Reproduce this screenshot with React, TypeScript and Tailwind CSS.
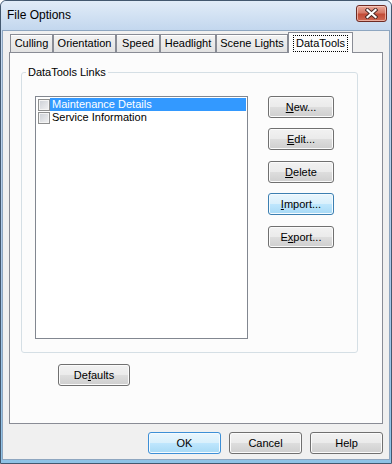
import React from 'react';

// Win7 "File Options" property sheet, DataTools page

const btn = 'flex items-center justify-center h-[22px] rounded-[3px] border text-[11px] leading-[13px] text-black';
const btnNormal = 'border-[#707070] bg-[linear-gradient(#f2f2f2_0%,#ebebeb_48%,#dddddd_52%,#cfcfcf_100%)] shadow-[inset_0_0_0_1px_#fbfbfb]';
const btnHot = 'border-[#3c7fb1] bg-[linear-gradient(#eaf6fd_0%,#d9f0fc_48%,#bee6fd_52%,#a7d9f5_100%)] shadow-[inset_0_0_0_1px_#f4fbff]';

function Label({ text, u }: { text: string; u?: number }) {
  if (u === undefined) return <span>{text}</span>;
  return (
    <span>
      {text.slice(0, u)}
      <span className="underline underline-offset-[1px]">{text[u]}</span>
      {text.slice(u + 1)}
    </span>
  );
}

function Btn({ text, u, hot, className }: { text: string; u?: number; hot?: boolean; className: string }) {
  return (
    <div className={`${btn} ${hot ? btnHot : btnNormal} ${className}`}>
      <Label text={text} u={u} />
    </div>
  );
}

const tabs = [
  { label: 'Culling', cls: 'ml-[1px] w-[43px]' },
  { label: 'Orientation', cls: 'w-[63px]' },
  { label: 'Speed', cls: 'w-[44px]' },
  { label: 'Headlight', cls: 'w-[56px]' },
  { label: 'Scene Lights', cls: 'w-[72px]' },
];

function CheckBox() {
  return (
    <div className="w-[12px] h-[12px] shrink-0 border border-[#8e8f8f] bg-[linear-gradient(135deg,#cbcfd5,#f2f2f3)] shadow-[inset_0_0_0_1px_#f4f4f4]" />
  );
}

export default function App() {
  return (
    <div className="w-[392px] h-[464px] flex flex-col bg-[linear-gradient(#c9dcf1,#a9c7e8_60%,#8ec2e6)] border border-[#43586f] rounded-t-[6px] font-['Liberation_Sans',Arial,sans-serif] text-black overflow-hidden">
      {/* title bar */}
      <div className="h-[29px] shrink-0 flex items-start justify-between pl-[6px] pr-[4px] bg-[linear-gradient(#e1ecf8,#c3d7ee)] rounded-t-[5px]">
        <span className="mt-[7px] text-[12px] leading-[15px]">File Options</span>
        <div className="mt-[4px] w-[31px] h-[17px] rounded-[3px] border border-[#6e2b24] bg-[linear-gradient(#e9a898_0%,#d67a68_45%,#c24b36_55%,#cf6a55_100%)] shadow-[inset_0_0_0_1px_rgba(255,220,210,0.6)] flex items-center justify-center">
          <svg width="13" height="11" viewBox="0 0 13 11">
            <path d="M2.5 2 L10.5 9 M10.5 2 L2.5 9" stroke="#4a2a26" strokeWidth="4" strokeLinecap="square" />
            <path d="M2.5 2 L10.5 9 M10.5 2 L2.5 9" stroke="#ffffff" strokeWidth="2.2" strokeLinecap="square" />
          </svg>
        </div>
      </div>

      {/* client area */}
      <div className="flex-1 mx-[1px] mb-[3px] bg-[#f0f0f0] border border-[#8ea6c0] flex flex-col px-[6px] pt-[1px]">
        {/* tab strip */}
        <div className="h-[21px] -mb-px flex items-end text-[11px] leading-[13px]">
          {tabs.map((t) => (
            <div
              key={t.label}
              className={`${t.cls} h-[18px] mb-px shrink-0 border border-b-0 border-[#898c95] bg-[linear-gradient(#f3f3f3,#e2e2e2)] shadow-[inset_0_1px_0_#ffffff] flex items-center justify-center`}
            >
              {t.label}
            </div>
          ))}
          <div className="relative z-10 w-[65px] h-[21px] shrink-0 border border-b-0 border-[#898c95] bg-[#fcfcfc] flex items-start justify-center pt-[2px]">
            <span className="h-[17px] px-[2px] border border-dotted border-black leading-[15px]">DataTools</span>
          </div>
        </div>

        {/* page */}
        <div className="h-[372px] border border-[#898c95] bg-[#fcfcfc] flex flex-col text-[11px] leading-[13px]">
          <fieldset className="mt-[13px] ml-[11px] w-[337px] border border-[#d5dfe5] rounded-[3px]">
            <legend className="ml-[4px] px-[2px] leading-[13px]">DataTools Links</legend>
            <div className="flex pl-[13px] pt-[17px] pb-[13px]">
              <div className="w-[213px] h-[243px] border border-[#828790] bg-white pt-[1px] px-[1px] flex flex-col">
                <div className="h-[13px] flex items-center">
                  <div className="ml-[1px]"><CheckBox /></div>
                  <div className="flex-1 h-full bg-[#3399ff] text-white pl-[2px] flex items-center">Maintenance Details</div>
                </div>
                <div className="h-[13px] flex items-center">
                  <div className="ml-[1px]"><CheckBox /></div>
                  <div className="flex-1 h-full pl-[2px] flex items-center">Service Information</div>
                </div>
              </div>
              <div className="ml-[20px] flex flex-col">
                <Btn text="New..." u={0} className="w-[66px]" />
                <Btn text="Edit..." u={0} className="w-[66px] mt-[10px]" />
                <Btn text="Delete" u={0} className="w-[66px] mt-[11px]" />
                <Btn text="Import..." u={0} hot className="w-[66px] mt-[10px]" />
                <Btn text="Export..." u={1} className="w-[66px] mt-[11px]" />
              </div>
            </div>
          </fieldset>
          <Btn text="Defaults" u={2} className="w-[72px] mt-[11px] ml-[48px]" />
        </div>

        {/* dialog buttons */}
        <div className="mt-[8px] flex justify-end gap-[8px]">
          <Btn text="OK" hot className="w-[73px] border-[#3d8fd6]" />
          <Btn text="Cancel" className="w-[73px]" />
          <Btn text="Help" className="w-[73px]" />
        </div>
      </div>
    </div>
  );
}
